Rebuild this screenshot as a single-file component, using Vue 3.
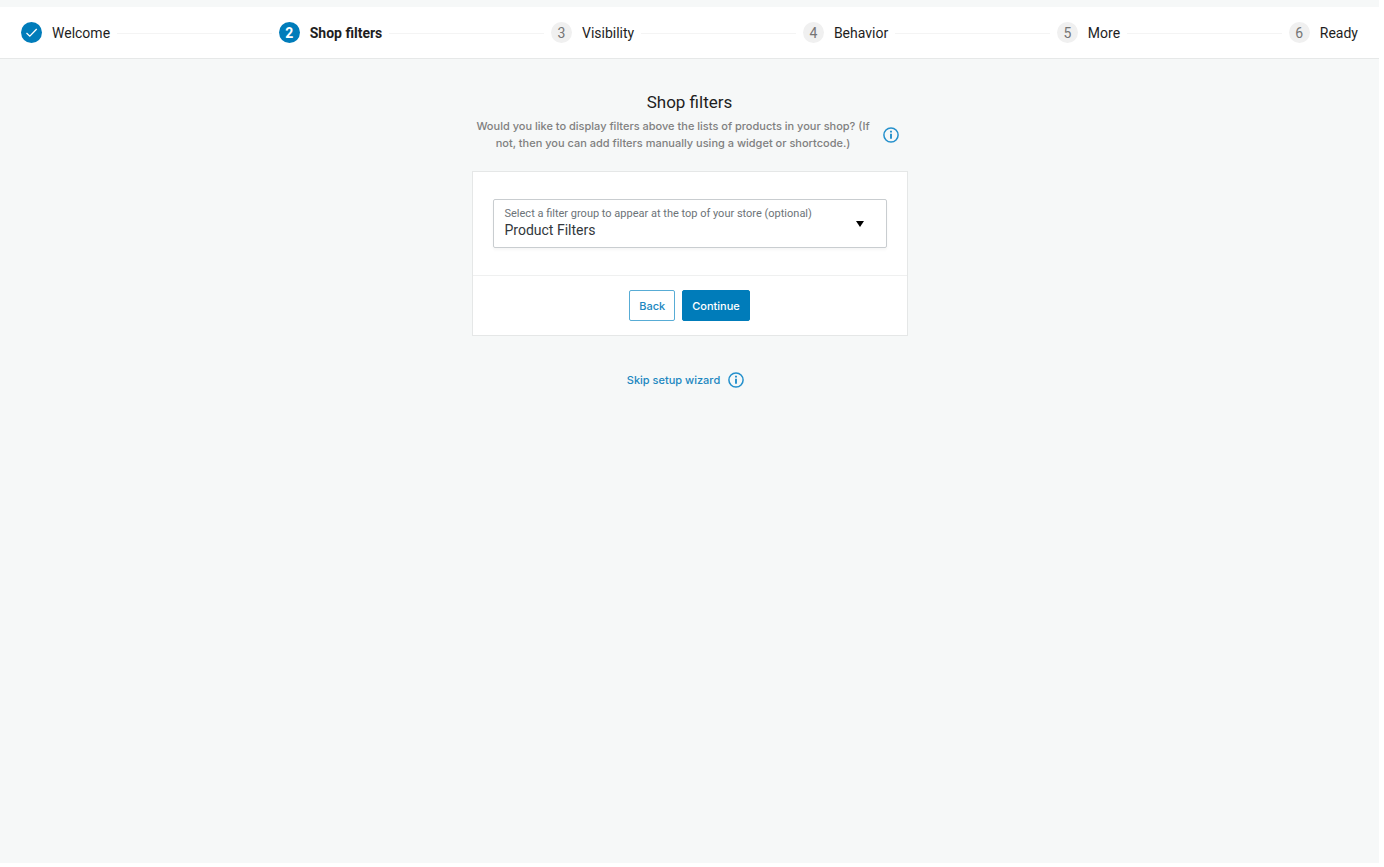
<script setup>
import { ref } from 'vue'

const steps = [
  { label: 'Welcome', state: 'done' },
  { label: 'Shop filters', state: 'current' },
  { label: 'Visibility', state: 'upcoming' },
  { label: 'Behavior', state: 'upcoming' },
  { label: 'More', state: 'upcoming' },
  { label: 'Ready', state: 'upcoming' },
]
const group = ref('Product Filters')
</script>

<template>
  <div class="page">
    <header class="stepper">
      <template v-for="(step, i) in steps" :key="step.label">
        <span v-if="i > 0" class="connector"></span>
        <div class="step" :class="step.state">
          <span class="badge">
            <svg v-if="step.state === 'done'" width="21" height="21" viewBox="0 0 21 21" fill="none" aria-hidden="true">
              <path d="M5.5 11l3.3 3.2 6.9-7.2" stroke="#fff" stroke-width="1.3" />
            </svg>
            <template v-else>{{ i + 1 }}</template>
          </span>
          <span class="label">{{ step.label }}</span>
        </div>
      </template>
    </header>

    <main class="content">
      <div class="intro">
        <h1>Shop filters</h1>
        <div class="intro-row">
          <p>Would you like to display filters above the lists of products in your shop? (If not, then you can add filters manually using a widget or shortcode.)</p>
          <button type="button" class="info" aria-label="More information">
            <svg width="16" height="16" viewBox="0 0 16 16" fill="none" aria-hidden="true">
              <circle cx="8" cy="8" r="7.1" stroke="#2490cc" stroke-width="1.5" />
              <path d="M8 6.8v5M8 3.8v1.7" stroke="#2490cc" stroke-width="1.9" />
            </svg>
          </button>
        </div>
      </div>

      <form class="card" @submit.prevent>
        <div class="card-body">
          <div class="field">
            <label for="filter-group">Select a filter group to appear at the top of your store (optional)</label>
            <select id="filter-group" v-model="group">
              <option>Product Filters</option>
            </select>
            <svg class="caret" width="8" height="6" viewBox="0 0 8 6" aria-hidden="true">
              <path d="M0 0h8L4 6z" fill="#000" />
            </svg>
          </div>
        </div>
        <footer class="card-footer">
          <button type="button" class="btn">Back</button>
          <button type="submit" class="btn primary">Continue</button>
        </footer>
      </form>

      <div class="skip">
        <a href="#">Skip setup wizard</a>
        <button type="button" class="info" aria-label="About skipping the wizard">
          <svg width="16" height="16" viewBox="0 0 16 16" fill="none" aria-hidden="true">
            <circle cx="8" cy="8" r="7.1" stroke="#2490cc" stroke-width="1.5" />
            <path d="M8 6.8v5M8 3.8v1.7" stroke="#2490cc" stroke-width="1.9" />
          </svg>
        </button>
      </div>
    </main>
  </div>
</template>

<style>
body {
  background: #fff;
}
</style>

<style scoped>
.page {
  box-sizing: border-box;
  min-height: calc(100vh - 4px);
  margin-right: 5px;
  padding-top: 7px;
  background: #f6f8f8;
  font-family: Inter, "Liberation Sans", sans-serif;
  color: #1e1e1e;
}
.stepper {
  display: flex;
  align-items: center;
  gap: 7px;
  height: 51px;
  padding: 0 21px;
  background: #fff;
  border-bottom: 1px solid #e6e8e8;
}
.connector {
  flex: 1;
  height: 1px;
  margin-top: 1px;
  background: #f4f4f4;
}
.step {
  display: flex;
  align-items: center;
  gap: 10px;
  font-family: Roboto, "Liberation Sans", sans-serif;
  font-size: 14px;
  line-height: 20px;
}
.badge {
  display: flex;
  align-items: center;
  justify-content: center;
  width: 21px;
  height: 21px;
  border-radius: 50%;
  background: #f0f0f0;
  color: #757575;
}
.done .badge,
.current .badge {
  background: #007cba;
  color: #fff;
}
.current {
  font-weight: 700;
}
.content {
  display: flex;
  flex-direction: column;
  align-items: center;
  padding-top: 31px;
}
.intro {
  width: 436px;
  max-width: 100%;
}
h1 {
  margin: 0;
  font-family: Roboto, "Liberation Sans", sans-serif;
  font-size: 17px;
  line-height: 24px;
  font-weight: 400;
  text-align: center;
}
.intro-row {
  display: flex;
  align-items: center;
  gap: 8px;
  padding: 4px 9px 0 0;
}
p {
  flex: 1;
  margin: 0;
  font-size: 11px;
  line-height: 17px;
  font-weight: 500;
  color: #808080;
  text-align: center;
}
.info {
  display: flex;
  padding: 0;
  border: 0;
  background: none;
}
.card {
  box-sizing: border-box;
  width: 436px;
  max-width: 100%;
  margin-top: 19px;
  border: 1px solid #e5e7e7;
  background: #fff;
}
.card-body {
  padding: 27px 20px;
}
.field {
  position: relative;
}
.field label {
  position: absolute;
  top: 8px;
  left: 12px;
  font-family: Roboto, "Liberation Sans", sans-serif;
  font-size: 11px;
  line-height: 14px;
  color: #6c7378;
}
select {
  box-sizing: border-box;
  display: block;
  width: 100%;
  height: 49px;
  padding: 12px 32px 0 11px;
  border: 1px solid #c9cdd0;
  border-radius: 2px;
  background: #fff;
  box-shadow: 0 2px 3px #0000000a;
  color: #32373c;
  font-family: Roboto, "Liberation Sans", sans-serif;
  font-size: 14px;
  appearance: none;
}
.caret {
  position: absolute;
  top: 22px;
  right: 23px;
  pointer-events: none;
}
.card-footer {
  display: flex;
  justify-content: center;
  gap: 7px;
  padding: 14px;
  border-top: 1px solid #eff0f0;
}
.btn {
  height: 31px;
  padding: 0 9px;
  border: 1px solid #58acd5;
  border-radius: 2px;
  background: #fff;
  color: #2187c0;
  font-family: inherit;
  font-size: 11px;
  font-weight: 500;
}
.primary {
  border-color: #007cba;
  background: #007cba;
  color: #fff;
}
.skip {
  display: flex;
  align-items: center;
  gap: 8px;
  margin-top: 36px;
  padding-right: 8px;
}
.skip a {
  color: #2187c0;
  font-size: 11px;
  font-weight: 500;
  text-decoration: none;
}
</style>
